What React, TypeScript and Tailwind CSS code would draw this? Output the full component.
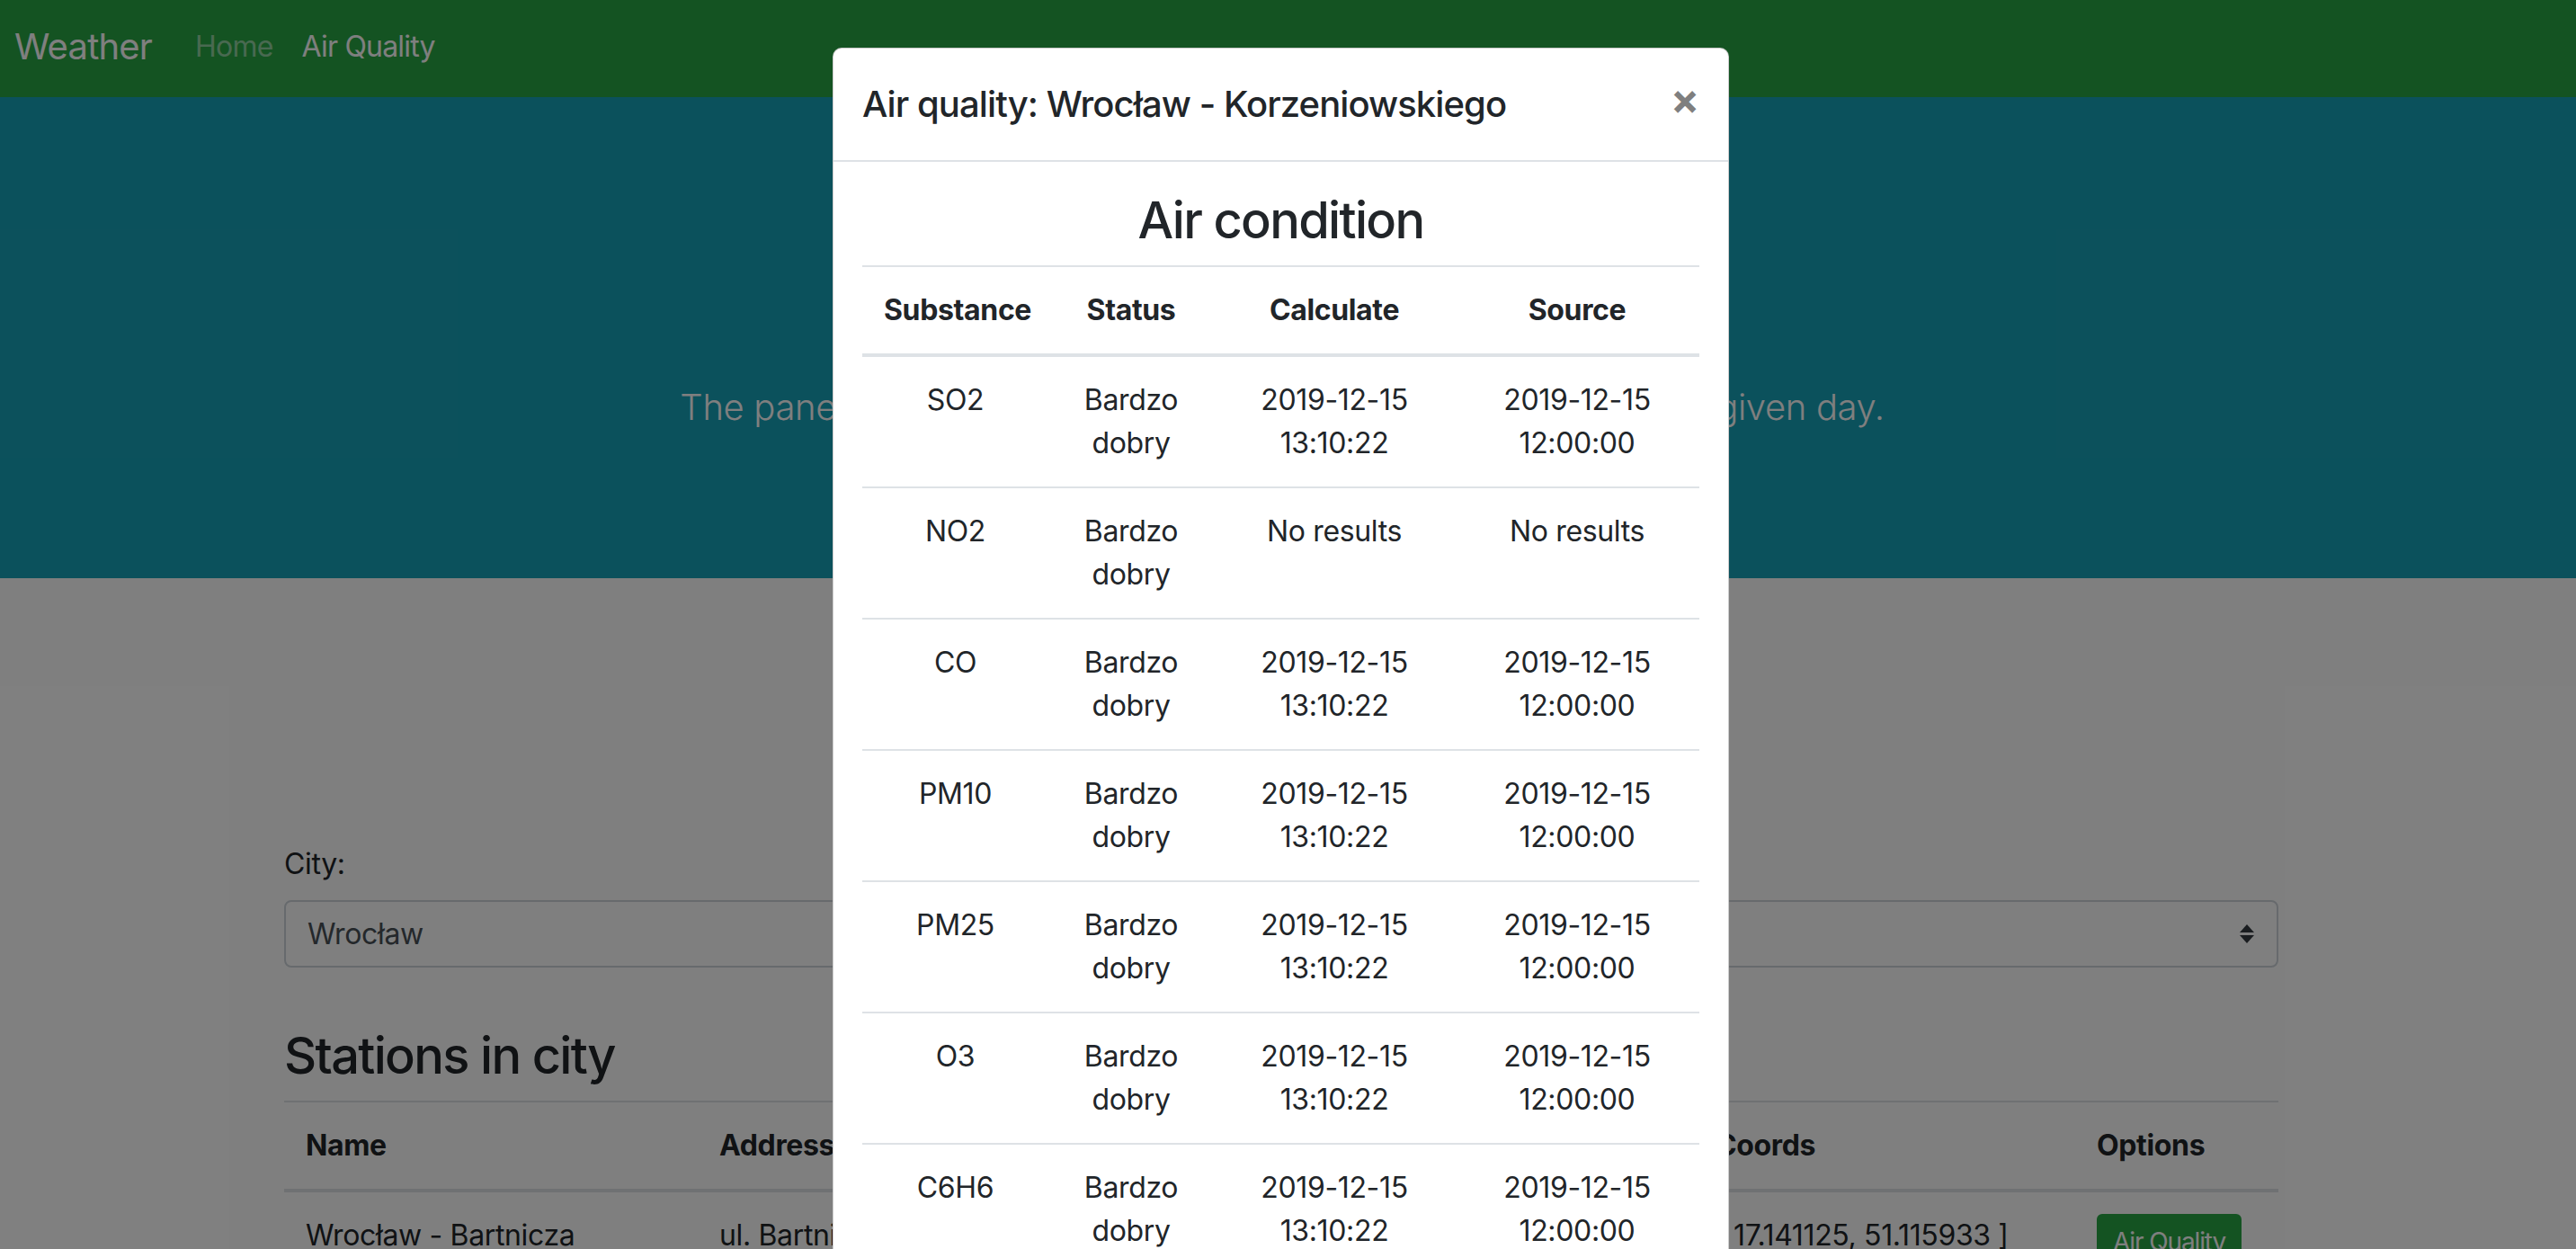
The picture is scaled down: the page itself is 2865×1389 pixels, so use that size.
import React from 'react';

type Reading = {
  substance: string;
  status: string;
  calculated: string;
  source: string;
};

const readings: Reading[] = [
  { substance: 'SO2', status: 'Bardzo dobry', calculated: '2019-12-15 13:10:22', source: '2019-12-15 12:00:00' },
  { substance: 'NO2', status: 'Bardzo dobry', calculated: 'No results', source: 'No results' },
  { substance: 'CO', status: 'Bardzo dobry', calculated: '2019-12-15 13:10:22', source: '2019-12-15 12:00:00' },
  { substance: 'PM10', status: 'Bardzo dobry', calculated: '2019-12-15 13:10:22', source: '2019-12-15 12:00:00' },
  { substance: 'PM25', status: 'Bardzo dobry', calculated: '2019-12-15 13:10:22', source: '2019-12-15 12:00:00' },
  { substance: 'O3', status: 'Bardzo dobry', calculated: '2019-12-15 13:10:22', source: '2019-12-15 12:00:00' },
  { substance: 'C6H6', status: 'Bardzo dobry', calculated: '2019-12-15 13:10:22', source: '2019-12-15 12:00:00' },
];

const stations = [
  { name: 'Wrocław - Bartnicza', address: 'ul. Bartnicza', coords: '[ 17.141125, 51.115933 ]' },
  { name: 'Wrocław - Korzeniowskiego', address: 'ul. Wyb. J.Conrada-Korzeniowskiego 18', coords: '[ 17.02925, 51.129378 ]' },
];

const SelectArrows = () => (
  <svg width="16" height="22" viewBox="0 0 16 22" className="shrink-0">
    <polygon points="0,9 8,0 16,9" fill="#343a40" />
    <polygon points="0,12 16,12 8,21" fill="#343a40" />
  </svg>
);

const AirQualityModal = () => (
  <div className="absolute inset-0 flex justify-center pr-[16px] pt-[53px]">
    <div className="h-fit w-[997px] rounded-[10px] border border-black/20 bg-white">
      {/* Header */}
      <div className="flex items-start border-b-2 border-[#dee2e6] p-[32px]">
        <h5 className="text-[40px] font-medium leading-[60px] tracking-[-0.023em] text-[#212529]">
          Air quality: Wrocław - Korzeniowskiego
        </h5>
        <button className="-mt-[6px] ml-auto text-[48px] font-bold leading-[60px] text-black/50">×</button>
      </div>

      {/* Body */}
      <div className="p-[32px]">
        <h3 className="mb-[16px] text-center text-[56px] font-medium leading-[67px] tracking-[-0.03em] text-[#212529]">
          Air condition
        </h3>
        <table className="w-[931px] table-fixed border-collapse text-center text-[32px] leading-[48px] text-[#212529]">
          <colgroup>
            <col className="w-[207px]" />
            <col className="w-[184px]" />
            <col className="w-[268px]" />
            <col className="w-[272px]" />
          </colgroup>
          <thead>
            <tr>
              {['Substance', 'Status', 'Calculate', 'Source'].map((h) => (
                <th key={h} className="border-t-2 border-b-4 border-[#dee2e6] p-[24px] font-bold">
                  {h}
                </th>
              ))}
            </tr>
          </thead>
          <tbody>
            {readings.map((r) => (
              <tr key={r.substance}>
                <td className="border-t-2 border-[#dee2e6] p-[24px] align-top">{r.substance}</td>
                <td className="border-t-2 border-[#dee2e6] p-[24px] align-top">{r.status}</td>
                <td className="border-t-2 border-[#dee2e6] p-[24px] align-top">{r.calculated}</td>
                <td className="border-t-2 border-[#dee2e6] p-[24px] align-top">{r.source}</td>
              </tr>
            ))}
          </tbody>
        </table>
      </div>
    </div>
  </div>
);

export default function App() {
  return (
    <div className="relative h-[1389px] w-[2865px] overflow-hidden bg-white font-['Inter','Liberation_Sans',sans-serif] tracking-[-0.022em] text-[#212529]">
      {/* Navbar */}
      <nav className="flex h-[108px] items-center bg-[#28a745] pb-[4px] pl-[16px] tracking-[-0.05em]">
        <span className="mr-[32px] text-[40px] leading-[60px] text-white">Weather</span>
        <a className="px-[16px] text-[32px] leading-[48px] text-white/50">Home</a>
        <a className="px-[16px] text-[32px] leading-[48px] text-white">Air Quality</a>
      </nav>

      {/* Jumbotron */}
      <div className="h-[535px] bg-[#17a2b8] pt-[128px]">
        <div className="ml-[286px] w-[2280px] text-center text-white">
          <h1 className="mb-[53px] text-[112px] font-light leading-[134px]">Air Quality</h1>
          <p className="text-[40px] font-light leading-[60px]">
            The panel shows air quality data for the selected station on the given day.
          </p>
        </div>
      </div>

      {/* Content */}
      <div className="ml-[316px] w-[2218px] pt-[294px]">
        <label className="mb-[16px] block text-[32px] leading-[48px]">City:</label>
        <div className="flex h-[75px] items-center rounded-[8px] border-2 border-[#ced4da] bg-white pl-[24px] pr-[25px] text-[32px] text-[#495057]">
          <span>Wrocław</span>
          <span className="ml-auto">
            <SelectArrows />
          </span>
        </div>

        <h3 className="mb-[16px] mt-[65px] text-[56px] font-medium leading-[67px] tracking-[-0.03em]">
          Stations in city
        </h3>
        <table className="w-[2218px] table-fixed border-collapse text-left text-[32px] leading-[48px]">
          <colgroup>
            <col className="w-[460px]" />
            <col className="w-[1108px]" />
            <col className="w-[424px]" />
            <col className="w-[226px]" />
          </colgroup>
          <thead>
            <tr>
              {['Name', 'Address', 'Coords', 'Options'].map((h) => (
                <th key={h} className="border-t-2 border-b-4 border-[#dee2e6] p-[24px] font-bold">
                  {h}
                </th>
              ))}
            </tr>
          </thead>
          <tbody>
            {stations.map((s) => (
              <tr key={s.name}>
                <td className="border-t-2 border-[#dee2e6] p-[24px] align-top">{s.name}</td>
                <td className="border-t-2 border-[#dee2e6] p-[24px] align-top">{s.address}</td>
                <td className="border-t-2 border-[#dee2e6] p-[24px] align-top">{s.coords}</td>
                <td className="border-t-2 border-[#dee2e6] p-[24px] align-top">
                  <button className="rounded-[6px] border-2 border-[#28a745] bg-[#28a745] px-[16px] py-[8px] text-[28px] leading-[42px] tracking-[-0.04em] text-white">
                    Air Quality
                  </button>
                </td>
              </tr>
            ))}
          </tbody>
        </table>
      </div>

      {/* Backdrop */}
      <div className="absolute inset-0 bg-black/50" />

      <AirQualityModal />
    </div>
  );
}
